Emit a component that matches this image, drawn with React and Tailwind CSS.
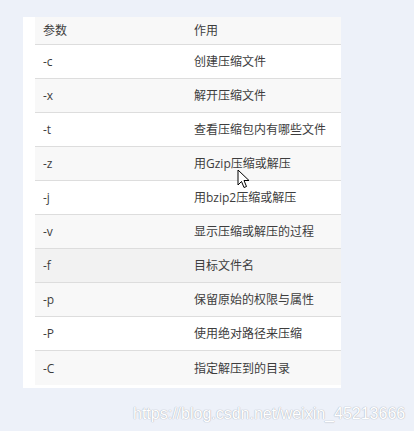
const rows = [
  ["-c", "创建压缩文件"],
  ["-x", "解开压缩文件"],
  ["-t", "查看压缩包内有哪些文件"],
  ["-z", "用Gzip压缩或解压"],
  ["-j", "用bzip2压缩或解压"],
  ["-v", "显示压缩或解压的过程"],
  ["-f", "目标文件名"],
  ["-p", "保留原始的权限与属性"],
  ["-P", "使用绝对路径来压缩"],
  ["-C", "指定解压到的目录"],
];

function Cursor() {
  return (
    <svg
      className="absolute left-[237px] top-[169px]"
      width="14"
      height="21"
      viewBox="0 0 14 21"
    >
      <path
        d="M1 1 L1 16 L4.5 12.5 L7 18.5 L9.5 17.5 L7 11.5 L12 11.5 Z"
        fill="#fff"
        stroke="#000"
        strokeWidth="1"
      />
    </svg>
  );
}

export default function App() {
  return (
    <div
      className="relative h-[431px] w-[414px] bg-[#edf1f9] pt-[17px]"
      style={{ fontFamily: '"Open Sans", "Noto Sans CJK SC", sans-serif' }}
    >
      <div className="ml-[23px] w-[318px] bg-white pb-[3px] pl-[12px]">
        <div className="flex h-[28px] items-center border-b border-[#dddddd] bg-[#f8f8f8] text-[12px] text-[#3d3d3d]">
          <div className="w-[159px] pl-[8px]">参数</div>
          <div>作用</div>
        </div>
        {rows.map(([flag, desc], i) => (
          <div
            key={flag}
            className={
              "flex h-[34px] items-center pt-[1px] text-[12px] text-[#3d3d3d] " +
              (i < rows.length - 1 ? "border-b border-[#dddddd] " : "") +
              (flag === "-f"
                ? "bg-[#f2f2f2]"
                : i % 2 === 1 || i === 9
                ? "bg-[#f8f8f8]"
                : "bg-white")
            }
          >
            <div className="w-[159px] pl-[8px]">{flag}</div>
            <div>{desc}</div>
          </div>
        ))}
      </div>
      <div
        className="absolute left-[133px] top-[402px] text-[16px] text-white"
        style={{
          fontFamily: '"Liberation Sans", Arial, sans-serif',
          textShadow: "0 0 1px #aeb3bd, 0 0 1px #aeb3bd",
        }}
      >
        https://blog.csdn.net/weixin_45213666
      </div>
      <Cursor />
    </div>
  );
}
